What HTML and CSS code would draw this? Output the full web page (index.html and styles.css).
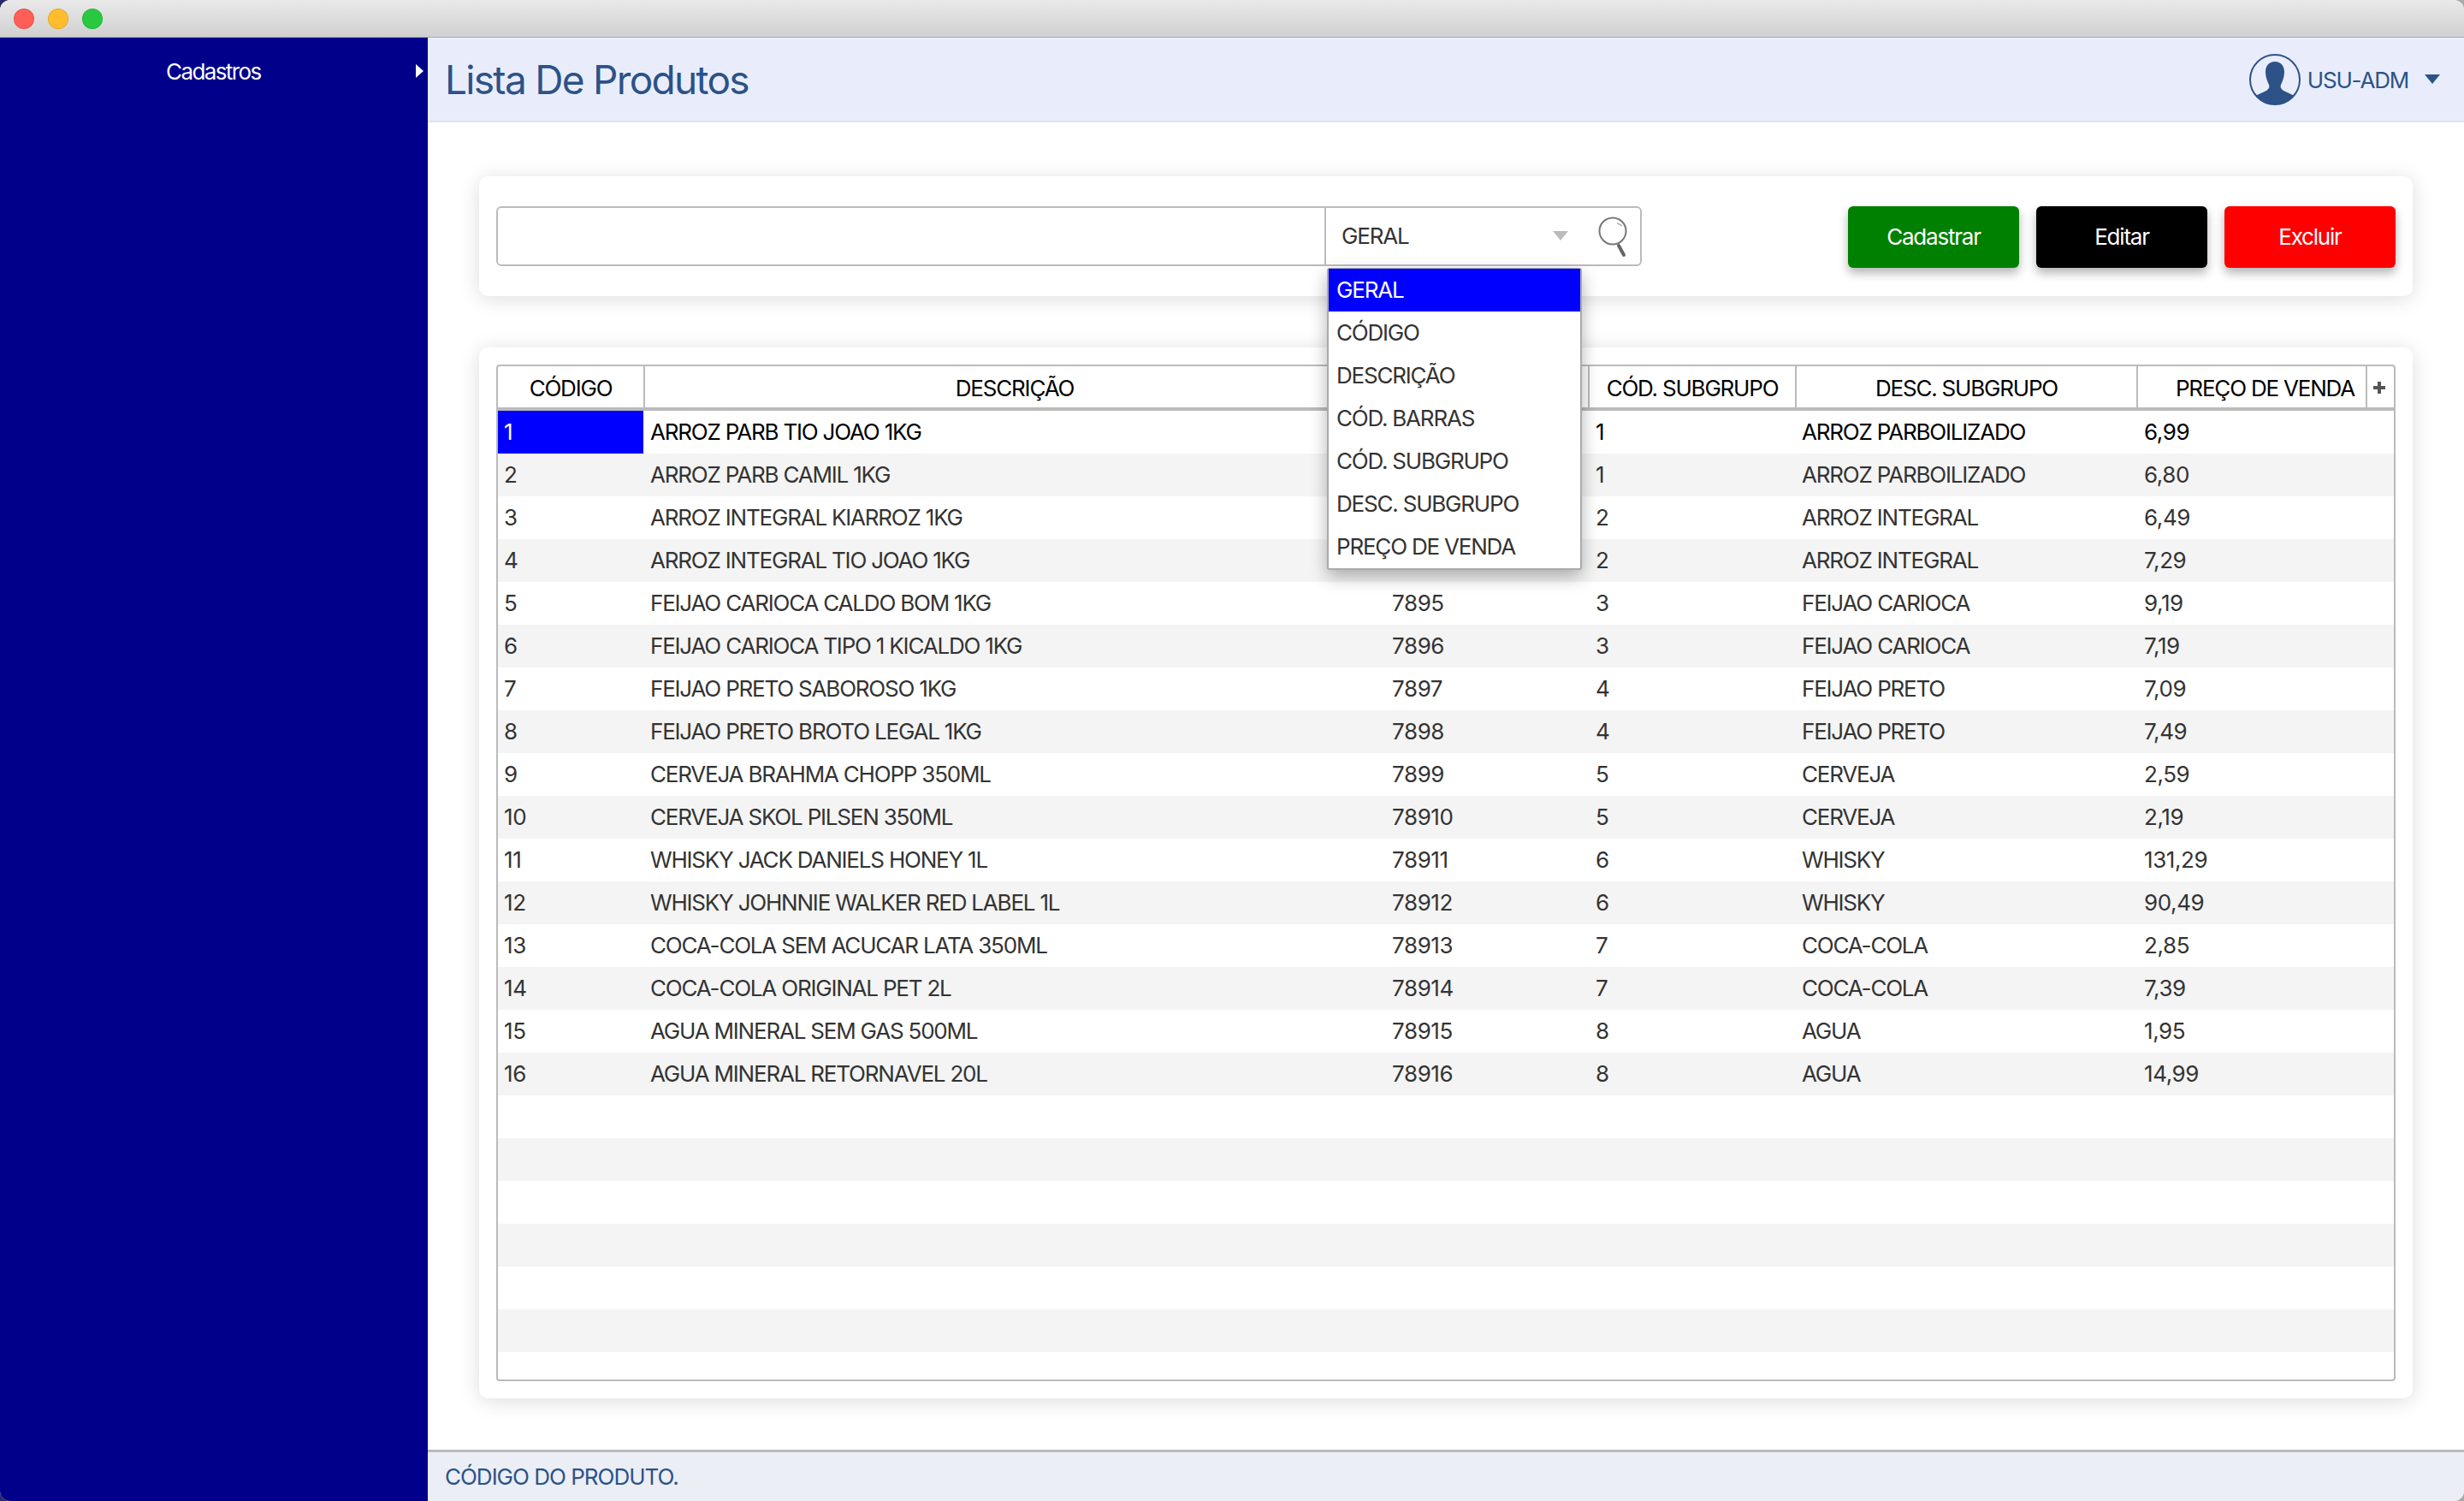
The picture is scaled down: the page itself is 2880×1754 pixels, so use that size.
FILE: index.html
```html
<!DOCTYPE html>
<html lang="pt-BR">
<head>
  <meta charset="UTF-8">
  <meta name="viewport" content="width=device-width, initial-scale=1.0">
  <title>Lista De Produtos</title>
  <link rel="stylesheet" href="styles.css">
</head>
<body>
  <div class="window">
    <div class="titlebar">
      <span class="dot dot-red"></span>
      <span class="dot dot-yellow"></span>
      <span class="dot dot-green"></span>
    </div>

    <div class="app">
      <nav class="sidebar">
        <div class="menu-item">
          <span>Cadastros</span>
          <span class="menu-arrow"></span>
        </div>
      </nav>

      <div class="content">
        <header class="topbar">
          <h1 class="page-title">Lista De Produtos</h1>
          <div class="user">
            <svg class="avatar" width="60" height="60" viewBox="0 0 60 60">
              <defs>
                <clipPath id="avatarClip"><circle cx="30" cy="30" r="29"/></clipPath>
              </defs>
              <circle cx="30" cy="30" r="29" fill="none" stroke="#2c5288" stroke-width="2"/>
              <path clip-path="url(#avatarClip)" fill="#2c5288" d="M30 9C37 9 41 14 41 21C41 27 39 32 37 36C36 39 37 41 40 43C44 45 50 47 54 50L54 60L6 60L6 50C10 47 16 45 20 43C23 41 24 39 23 36C21 32 19 27 19 21C19 14 23 9 30 9Z"/>
            </svg>
            <span class="user-name">USU-ADM</span>
            <span class="user-caret"></span>
          </div>
        </header>

        <main class="main">
          <section class="card toolbar">
            <div class="search">
              <input class="search-input" type="text">
              <div class="search-select">
                <span>GERAL</span>
                <span class="select-caret"></span>
                <svg class="search-icon" width="40" height="50" viewBox="0 0 40 50">
                  <circle cx="19" cy="19" r="15.5" fill="none" stroke="#777" stroke-width="2"/>
                  <path d="M24 9.5L30 13" fill="none" stroke="#bbb" stroke-width="2"/>
                  <path d="M26 36L32 47" fill="none" stroke="#666" stroke-width="4" stroke-linecap="round"/>
                </svg>
                <ul class="dropdown">
                  <li class="dropdown-active">GERAL</li>
                  <li>CÓDIGO</li>
                  <li>DESCRIÇÃO</li>
                  <li>CÓD. BARRAS</li>
                  <li>CÓD. SUBGRUPO</li>
                  <li>DESC. SUBGRUPO</li>
                  <li>PREÇO DE VENDA</li>
                </ul>
              </div>
            </div>
            <div class="actions">
              <button class="btn btn-green" type="button">Cadastrar</button>
              <button class="btn btn-black" type="button">Editar</button>
              <button class="btn btn-red" type="button">Excluir</button>
            </div>
          </section>

          <section class="card table-card">
            <div class="table-wrap">
              <table class="grid">
                <colgroup>
                  <col class="col-code">
                  <col class="col-desc">
                  <col class="col-bar">
                  <col class="col-sub">
                  <col class="col-subdesc">
                  <col class="col-price">
                  <col class="col-plus">
                </colgroup>
                <thead>
                  <tr>
                    <th>CÓDIGO</th>
                    <th>DESCRIÇÃO</th>
                    <th></th>
                    <th>CÓD. SUBGRUPO</th>
                    <th>DESC. SUBGRUPO</th>
                    <th class="th-price">PREÇO DE VENDA</th>
                    <th class="th-plus">
                      <svg width="14" height="14" viewBox="0 0 14 14"><path fill="#555" d="M5 0H9V5H14V9H9V14H5V9H0V5H5Z"/></svg>
                    </th>
                  </tr>
                </thead>
                <tbody>
                  <tr class="row-selected"><td class="cell-selected">1</td><td>ARROZ PARB TIO JOAO 1KG</td><td></td><td>1</td><td>ARROZ PARBOILIZADO</td><td>6,99</td><td></td></tr>
                  <tr><td>2</td><td>ARROZ PARB CAMIL 1KG</td><td></td><td>1</td><td>ARROZ PARBOILIZADO</td><td>6,80</td><td></td></tr>
                  <tr><td>3</td><td>ARROZ INTEGRAL KIARROZ 1KG</td><td></td><td>2</td><td>ARROZ INTEGRAL</td><td>6,49</td><td></td></tr>
                  <tr><td>4</td><td>ARROZ INTEGRAL TIO JOAO 1KG</td><td></td><td>2</td><td>ARROZ INTEGRAL</td><td>7,29</td><td></td></tr>
                  <tr><td>5</td><td>FEIJAO CARIOCA CALDO BOM 1KG</td><td>7895</td><td>3</td><td>FEIJAO CARIOCA</td><td>9,19</td><td></td></tr>
                  <tr><td>6</td><td>FEIJAO CARIOCA TIPO 1 KICALDO 1KG</td><td>7896</td><td>3</td><td>FEIJAO CARIOCA</td><td>7,19</td><td></td></tr>
                  <tr><td>7</td><td>FEIJAO PRETO SABOROSO 1KG</td><td>7897</td><td>4</td><td>FEIJAO PRETO</td><td>7,09</td><td></td></tr>
                  <tr><td>8</td><td>FEIJAO PRETO BROTO LEGAL 1KG</td><td>7898</td><td>4</td><td>FEIJAO PRETO</td><td>7,49</td><td></td></tr>
                  <tr><td>9</td><td>CERVEJA BRAHMA CHOPP 350ML</td><td>7899</td><td>5</td><td>CERVEJA</td><td>2,59</td><td></td></tr>
                  <tr><td>10</td><td>CERVEJA SKOL PILSEN 350ML</td><td>78910</td><td>5</td><td>CERVEJA</td><td>2,19</td><td></td></tr>
                  <tr><td>11</td><td>WHISKY JACK DANIELS HONEY 1L</td><td>78911</td><td>6</td><td>WHISKY</td><td>131,29</td><td></td></tr>
                  <tr><td>12</td><td>WHISKY JOHNNIE WALKER RED LABEL 1L</td><td>78912</td><td>6</td><td>WHISKY</td><td>90,49</td><td></td></tr>
                  <tr><td>13</td><td>COCA-COLA SEM ACUCAR LATA 350ML</td><td>78913</td><td>7</td><td>COCA-COLA</td><td>2,85</td><td></td></tr>
                  <tr><td>14</td><td>COCA-COLA ORIGINAL PET 2L</td><td>78914</td><td>7</td><td>COCA-COLA</td><td>7,39</td><td></td></tr>
                  <tr><td>15</td><td>AGUA MINERAL SEM GAS 500ML</td><td>78915</td><td>8</td><td>AGUA</td><td>1,95</td><td></td></tr>
                  <tr><td>16</td><td>AGUA MINERAL RETORNAVEL 20L</td><td>78916</td><td>8</td><td>AGUA</td><td>14,99</td><td></td></tr>
                  <tr><td colspan="7"></td></tr>
                  <tr><td colspan="7"></td></tr>
                  <tr><td colspan="7"></td></tr>
                  <tr><td colspan="7"></td></tr>
                  <tr><td colspan="7"></td></tr>
                  <tr><td colspan="7"></td></tr>
                  <tr><td colspan="7"></td></tr>
                </tbody>
              </table>
            </div>
          </section>
        </main>

        <footer class="statusbar">CÓDIGO DO PRODUTO.</footer>
      </div>
    </div>
  </div>
</body>
</html>
```

FILE: styles.css
```css
* {
  box-sizing: border-box;
}

html,
body {
  height: 100%;
}

body {
  margin: 0;
  font-family: Inter, "Liberation Sans", sans-serif;
  font-size: 26px;
  letter-spacing: -1.2px;
  color: #333;
  background: linear-gradient(to right, #2a2a66, #aaa 50%);
}

.window {
  height: 100%;
  display: flex;
  flex-direction: column;
  border-radius: 12px;
  overflow: hidden;
  background-color: #fff;
}

/* title bar */
.titlebar {
  height: 44px;
  flex: none;
  display: flex;
  align-items: center;
  gap: 16px;
  padding-left: 16px;
  background: linear-gradient(#e9e9e9, #d0d0d0);
  border-bottom: 1px solid #aaa;
}

.dot {
  width: 24px;
  height: 24px;
  border-radius: 50%;
  border: 1px solid rgba(0, 0, 0, 0.1);
}

.dot-red {
  background-color: #ff5f57;
}

.dot-yellow {
  background-color: #ffbd2e;
}

.dot-green {
  background-color: #28c941;
}

.app {
  flex: 1;
  min-height: 0;
  display: flex;
}

/* sidebar */
.sidebar {
  width: 500px;
  flex: none;
  background-color: #00008b;
  color: #fff;
  letter-spacing: -1.6px;
}

.menu-item {
  height: 80px;
  display: flex;
  align-items: center;
  justify-content: space-between;
  padding: 0 5px 2px 194px;
}

.menu-arrow {
  width: 0;
  height: 0;
  border-left: 9px solid #fff;
  border-top: 8px solid transparent;
  border-bottom: 8px solid transparent;
}

.content {
  flex: 1;
  min-width: 0;
  display: flex;
  flex-direction: column;
}

/* top bar */
.topbar {
  height: 99px;
  flex: none;
  display: flex;
  align-items: center;
  justify-content: space-between;
  padding: 0 28px 0 20px;
  background-color: #e9edfb;
  border-bottom: 2px solid #dde3f5;
  color: #2c5288;
}

.page-title {
  margin: 0;
  font-size: 46px;
  font-weight: 400;
  letter-spacing: -1.7px;
}

.user {
  display: flex;
  align-items: center;
}

.avatar {
  margin-right: 8px;
}

.user-name {
  padding-top: 2px;
}

.user-caret {
  margin-left: 19px;
  width: 0;
  height: 0;
  border-top: 11px solid #2c5288;
  border-left: 9px solid transparent;
  border-right: 9px solid transparent;
}

/* cards */
.main {
  flex: 1;
  min-height: 0;
  display: flex;
  flex-direction: column;
  gap: 60px;
  padding: 63px 60px 60px;
}

.card {
  background-color: #fff;
  border-radius: 10px;
  box-shadow: 0 3px 24px rgba(0, 0, 0, 0.14);
}

.toolbar {
  height: 140px;
  flex: none;
  display: flex;
  align-items: flex-start;
  justify-content: space-between;
  padding: 35px 20px 0;
}

.search {
  width: 1339px;
  height: 70px;
  display: flex;
  border: 2px solid #bbb;
  border-radius: 6px;
}

.search-input {
  flex: 1;
  min-width: 0;
  border: none;
  outline: none;
  background: transparent;
  font: inherit;
}

.search-select {
  position: relative;
  width: 369px;
  flex: none;
  display: flex;
  align-items: center;
  padding: 0 11px 1px 18px;
  border-left: 2px solid #bbb;
}

.select-caret {
  margin-left: auto;
  width: 0;
  height: 0;
  border-top: 11px solid #bbb;
  border-left: 9px solid transparent;
  border-right: 9px solid transparent;
}

.search-icon {
  margin-left: 33px;
}

.dropdown {
  position: absolute;
  top: 70px;
  left: 1px;
  z-index: 10;
  width: 298px;
  margin: 0;
  padding: 0;
  list-style: none;
  background-color: #fff;
  border: 2px solid #aaa;
  border-top-width: 1px;
  border-radius: 3px;
  box-shadow: 0 8px 20px rgba(0, 0, 0, 0.3);
}

.dropdown li {
  height: 50px;
  display: flex;
  align-items: center;
  padding: 0 0 1px 9px;
}

.dropdown .dropdown-active {
  background-color: #0000ff;
  color: #fff;
}

.actions {
  display: flex;
  gap: 20px;
}

.btn {
  width: 200px;
  height: 72px;
  padding: 0 0 2px;
  border: none;
  border-radius: 6px;
  color: #fff;
  font: inherit;
  letter-spacing: inherit;
  box-shadow: 0 6px 12px rgba(0, 0, 0, 0.3);
  cursor: pointer;
}

.btn-green {
  background-color: #008000;
}

.btn-black {
  background-color: #000;
}

.btn-red {
  background-color: #ff0000;
}

/* table */
.table-card {
  flex: 1;
  min-height: 0;
  display: flex;
  padding: 20px;
}

.table-wrap {
  flex: 1;
  min-width: 0;
  overflow: hidden;
  border: 2px solid #bbb;
  border-radius: 4px;
}

.grid {
  width: 2216px;
  table-layout: fixed;
  border-collapse: separate;
  border-spacing: 0;
}

.col-code { width: 172px; }
.col-desc { width: 866px; }
.col-bar { width: 238px; }
.col-sub { width: 242px; }
.col-subdesc { width: 399px; }
.col-price { width: 268px; }
.col-plus { width: 31px; }

.grid th {
  height: 52px;
  padding: 2px 0 0;
  font-weight: 400;
  color: #000;
  white-space: nowrap;
  border-right: 2px solid #bbb;
  border-bottom: 4px solid #bbb;
}

.grid .th-price {
  text-align: right;
  padding-right: 13px;
}

.grid .th-plus {
  border-right: none;
  vertical-align: top;
  text-align: left;
  padding: 7px 0 0 7px;
}

.grid td {
  height: 50px;
  padding: 0 7px 1px 6px;
  white-space: nowrap;
}

/* numeric columns sit wider than the text ones */
.grid td:nth-child(1),
.grid td:nth-child(3),
.grid td:nth-child(4),
.grid td:nth-child(6) {
  padding-left: 7px;
  letter-spacing: -0.4px;
}

.grid tbody tr:nth-child(even) {
  background-color: #f4f4f4;
}

.row-selected {
  color: #000;
}

.grid .cell-selected {
  background-color: #0000ff;
  background-clip: padding-box;
  border-right: 2px solid #fff;
  color: #fff;
  padding-left: 9px;
}

/* status bar */
.statusbar {
  height: 60px;
  flex: none;
  display: flex;
  align-items: center;
  padding: 0 0 1px 20px;
  background-color: #ebeef4;
  border-top: 3px solid #bbb;
  color: #2c5288;
  letter-spacing: -1px;
}
```
